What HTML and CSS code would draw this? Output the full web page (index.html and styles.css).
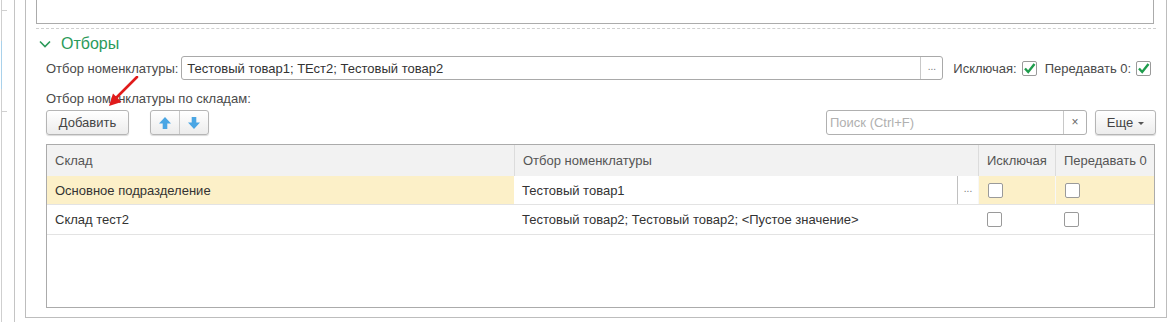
FILE: index.html
```html
<!DOCTYPE html>
<html lang="ru">
<head>
<meta charset="utf-8">
<link rel="stylesheet" href="styles.css">
</head>
<body>
<div class="page">
  <div class="side">
    <div class="side-a"><div class="tick t1"></div><div class="blue"></div><div class="tick t2"></div></div>
    <div class="side-b"></div>
  </div>
  <div class="frame">
    <div class="topbox"></div>
    <div class="dashed"></div>
    <div class="group-head">
      <svg class="chev" width="12" height="8" viewBox="0 0 12 8"><path d="M1 1.5 L6 6.5 L11 1.5" fill="none" stroke="#2b9a5a" stroke-width="1.6"/></svg>
      <span class="group-title">Отборы</span>
    </div>
    <div class="content">
      <div class="field-row">
        <span class="lbl">Отбор номенклатуры:</span>
        <div class="input wide">
          <span class="input-text">Тестовый товар1; ТЕст2; Тестовый товар2</span>
          <span class="dots">...</span>
        </div>
        <span class="lbl l2">Исключая:</span>
        <span class="cb checked"><svg width="13" height="13" viewBox="0 0 13 13"><path d="M2 6.5 L5.2 10 L11.5 2" fill="none" stroke="#1e9c4c" stroke-width="2.4"/></svg></span>
        <span class="lbl l3">Передавать 0:</span>
        <span class="cb checked"><svg width="13" height="13" viewBox="0 0 13 13"><path d="M2 6.5 L5.2 10 L11.5 2" fill="none" stroke="#1e9c4c" stroke-width="2.4"/></svg></span>
      </div>
      <div class="sub-label">Отбор номенклатуры по складам:</div>
      <div class="toolbar">
        <button class="btn add">Добавить</button>
        <div class="btn-group">
          <span class="btn-icon"><svg width="14" height="14" viewBox="0 0 14 14"><path d="M7 1 L13 7.5 L9.3 7.5 L9.3 13 L4.7 13 L4.7 7.5 L1 7.5 Z" fill="#4aa6e4"/></svg></span>
          <span class="btn-icon"><svg width="14" height="14" viewBox="0 0 14 14"><path d="M7 13 L13 6.5 L9.3 6.5 L9.3 1 L4.7 1 L4.7 6.5 L1 6.5 Z" fill="#4aa6e4"/></svg></span>
        </div>
        <div class="spacer"></div>
        <div class="search">
          <span class="ph">Поиск (Ctrl+F)</span>
          <span class="clear">×</span>
        </div>
        <button class="btn more">Еще <span class="tri"></span></button>
      </div>
      <div class="table">
        <div class="tr head">
          <div class="td">Склад</div>
          <div class="td">Отбор номенклатуры</div>
          <div class="td">Исключая</div>
          <div class="td">Передавать 0</div>
        </div>
        <div class="tr cur">
          <div class="td">Основное подразделение</div>
          <div class="td edit"><span class="ed-text">Тестовый товар1</span><span class="ed-dots">...</span></div>
          <div class="td c"><span class="cb"></span></div>
          <div class="td c"><span class="cb"></span></div>
        </div>
        <div class="tr">
          <div class="td">Склад тест2</div>
          <div class="td">Тестовый товар2; Тестовый товар2; &lt;Пустое значение&gt;</div>
          <div class="td c"><span class="cb"></span></div>
          <div class="td c"><span class="cb"></span></div>
        </div>
      </div>
    </div>
  </div>
  <svg class="arrow" width="40" height="40" viewBox="0 0 40 40"><path d="M31 1 L10 22" stroke="#e01b1b" stroke-width="2.6" fill="none" stroke-linecap="round"/><path d="M3 30 L7 17.5 L15.5 26 Z" fill="#e01b1b"/></svg>
</div>
</body>
</html>
```

FILE: styles.css
```css
html, body {
  margin: 0;
  padding: 0;
  background: #fff;
}
.page {
  position: relative;
  width: 1175px;
  height: 322px;
  overflow: hidden;
  display: flex;
  font-family: "Liberation Sans", Arial, sans-serif;
  font-size: 13px;
  color: #4a4a4a;
}
.side {
  width: 25px;
  display: flex;
  flex-shrink: 0;
}
.side-a {
  width: 13px;
  margin-left: 1px;
  border-left: 1px solid #cfcfcf;
  display: flex;
  flex-direction: column;
}
.tick {
  height: 0;
  width: 5px;
  border-top: 1px solid #d0d0d0;
}
.t1 { margin-top: 10px; }
.blue {
  margin-left: -1px;
  margin-top: 30px;
  height: 48px;
  border-left: 1px solid #a9d1ea;
}
.t2 { margin-top: 22px; }
.side-b {
  width: 11px;
  border-left: 1px solid #c4c4c4;
}
.frame {
  width: 1120px;
  height: 317px;
  border-left: 1px solid #bdbdbd;
  border-right: 1px solid #bdbdbd;
  border-bottom: 1px solid #bdbdbd;
  padding: 0 10px 0 10px;
  box-sizing: content-box;
  display: flex;
  flex-direction: column;
  flex-shrink: 0;
}
.topbox {
  height: 24px;
  margin-right: 2px;
  box-sizing: border-box;
  border: 1px solid #ababab;
  border-top: none;
}
.dashed {
  margin-top: 4px;
  border-top: 1px dashed #cfcfcf;
}
.group-head {
  height: 20px;
  margin-top: 5px;
  display: flex;
  align-items: center;
}
.chev {
  margin-left: 3px;
  margin-right: 10px;
}
.group-title {
  font-size: 16px;
  color: #2b9a5a;
  line-height: 20px;
}
.content {
  padding-left: 10px;
  display: flex;
  flex-direction: column;
}
.field-row {
  margin-top: 2px;
  height: 24px;
  display: flex;
  align-items: center;
}
.lbl { white-space: nowrap; }
.input {
  height: 24px;
  box-sizing: border-box;
  border: 1px solid #a9a9a9;
  border-radius: 3px;
  display: flex;
  align-items: center;
  background: #fff;
}
.wide {
  margin-left: 3px;
  width: 762px;
}
.input-text {
  flex: 1;
  padding-left: 5px;
  color: #333;
  white-space: nowrap;
}
.dots {
  width: 21px;
  height: 22px;
  border-left: 1px solid #c8c8c8;
  text-align: center;
  line-height: 20px;
  font-size: 10px;
  color: #777;
}
.l2 { margin-left: 10px; margin-right: 5px; }
.l3 { margin-left: 8px; margin-right: 5px; }
.cb {
  width: 15px;
  height: 15px;
  box-sizing: border-box;
  border: 1px solid #9a9a9a;
  border-radius: 2px;
  background: #fff;
  display: inline-flex;
  align-items: center;
  justify-content: center;
}
.sub-label {
  margin-top: 11px;
  line-height: 16px;
  height: 16px;
}
.toolbar {
  margin-top: 3px;
  height: 25px;
  display: flex;
  align-items: stretch;
}
.btn {
  font-family: inherit;
  font-size: 13px;
  color: #444;
  box-sizing: border-box;
  border: 1px solid #b5b5b5;
  border-radius: 3px;
  background: linear-gradient(#ffffff, #ececec);
  box-shadow: 0 1px 1px rgba(0,0,0,0.15);
  padding: 0;
  margin: 0;
}
.add { width: 83px; }
.btn-group {
  margin-left: 21px;
  width: 59px;
  display: flex;
  box-sizing: border-box;
  border: 1px solid #b5b5b5;
  border-radius: 3px;
  background: linear-gradient(#ffffff, #ececec);
  box-shadow: 0 1px 1px rgba(0,0,0,0.15);
}
.btn-icon {
  flex: 1;
  display: flex;
  align-items: center;
  justify-content: center;
}
.btn-icon + .btn-icon { border-left: 1px solid #c8c8c8; }
.spacer { flex: 1; }
.search {
  width: 261px;
  height: 25px;
  box-sizing: border-box;
  border: 1px solid #b0b0b0;
  border-radius: 3px;
  display: flex;
  align-items: center;
}
.ph {
  flex: 1;
  padding-left: 3px;
  color: #b0b0b0;
}
.clear {
  width: 22px;
  height: 23px;
  border-left: 1px solid #c8c8c8;
  text-align: center;
  line-height: 22px;
  font-size: 12px;
  color: #666;
}
.more {
  margin-left: 8px;
  width: 61px;
  display: flex;
  align-items: center;
  justify-content: center;
  gap: 5px;
}
.tri {
  width: 0;
  height: 0;
  border-left: 3px solid transparent;
  border-right: 3px solid transparent;
  border-top: 3px solid #555;
  margin-top: 2px;
}
.table {
  margin-top: 9px;
  width: 1109px;
  height: 164px;
  box-sizing: border-box;
  border: 1px solid #ababab;
  display: flex;
  flex-direction: column;
}
.tr {
  display: grid;
  grid-template-columns: 467px 464px 77px 1fr;
  height: 29px;
  border-bottom: 1px solid #e3e3e3;
}
.tr.head {
  height: 31px;
  background: #f2f2f2;
  border-bottom: none;
}
.tr.cur {
  height: 28px;
  background: #fcf0c8;
}
.td {
  display: flex;
  align-items: center;
  padding-left: 8px;
  color: #333;
  white-space: nowrap;
  overflow: hidden;
}
.head .td { color: #555; }
.head .td + .td { border-left: 1px solid #dcdcdc; }
.td.c { padding-left: 9px; }
.cur .td + .td.c { border-left: 1px solid #f7f7f7; }
.td.edit {
  background: #fff;
  padding-right: 0;
}
.ed-text { flex: 1; }
.ed-dots {
  width: 20px;
  height: 28px;
  border-left: 1px solid #c0c0c0;
  text-align: center;
  line-height: 26px;
  font-size: 10px;
  color: #777;
}
.arrow {
  position: absolute;
  left: 106px;
  top: 76px;
}
```
